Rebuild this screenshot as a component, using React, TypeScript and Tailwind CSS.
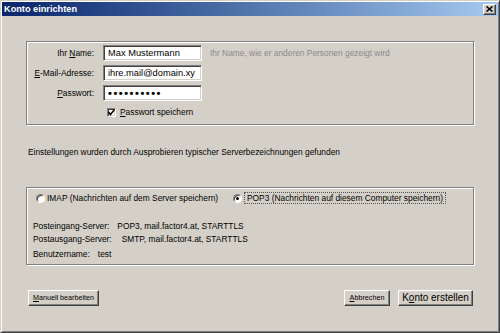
import React from "react";

const sunken =
  "border border-t-[#808080] border-l-[#808080] border-r-white border-b-white shadow-[inset_1px_1px_0_#404040,inset_-1px_-1px_0_#d4d0c8]";
const raised =
  "border border-t-white border-l-white border-r-[#404040] border-b-[#404040] shadow-[inset_-1px_-1px_0_#808080] bg-[#d4d0c8]";
const groupbox =
  "border border-[#808080] shadow-[1px_1px_0_#fff,inset_1px_1px_0_#fff]";

function U({ children }: { children: React.ReactNode }) {
  return <span className="underline underline-offset-[1px]">{children}</span>;
}

function Field({ label, children }: { label: React.ReactNode; children: React.ReactNode }) {
  return (
    <div className="flex items-center h-[16px]">
      <div className="w-[67px] text-right pr-[0px]">{label}</div>
      <div className={`ml-[9px] w-[99px] h-[16px] bg-white ${sunken} flex items-center pl-[4px] overflow-hidden whitespace-nowrap text-[9.3px]`}>
        {children}
      </div>
    </div>
  );
}

function Radio({ checked }: { checked?: boolean }) {
  return (
    <span className="w-[9px] h-[9px] rounded-full bg-white border border-t-[#808080] border-l-[#808080] border-r-white border-b-white shadow-[inset_1px_1px_0_#404040] flex items-center justify-center shrink-0">
      {checked && <span className="w-[3px] h-[3px] rounded-full bg-black" />}
    </span>
  );
}

export default function App() {
  return (
    <div className="w-[500px] h-[333px] bg-[#d4d0c8] border border-t-[#d4d0c8] border-l-[#d4d0c8] border-r-[#404040] border-b-[#404040] p-px shadow-[inset_1px_1px_0_#fff,inset_-1px_-1px_0_#808080] flex flex-col font-['Liberation_Sans',Arial,sans-serif] text-[8.4px] text-black leading-[12px]">
      {/* title bar */}
      <div className="h-[14px] flex items-center justify-between bg-gradient-to-r from-[#0a246a] to-[#a6caf0] pl-[2px] pr-[2px]">
        <span className="text-white font-bold text-[9.2px]">Konto einrichten</span>
        <button className={`w-[13px] h-[11px] ${raised} flex items-center justify-center`}>
          <svg width="7" height="6" viewBox="0 0 7 6">
            <path d="M0.5 0.5 L6.5 5.5 M6.5 0.5 L0.5 5.5" stroke="#000" strokeWidth="1.6" />
          </svg>
        </button>
      </div>

      <div className="flex flex-col px-[24px]">
        {/* account fields */}
        <div className={`mt-[25px] h-[84px] ${groupbox} pt-[3px] flex flex-col`}>
          <div className="flex items-center">
            <div className="flex flex-col gap-[4px]">
              <Field label={<>Ihr <U>N</U>ame:</>}>Max Mustermann</Field>
              <Field label={<><U>E</U>-Mail-Adresse:</>}>ihre.mail@domain.xy</Field>
              <Field label={<><U>P</U>asswort:</>}>
                <span className="text-[11px] font-bold tracking-[1.55px] leading-[12px]">••••••••••</span>
              </Field>
            </div>
            <div className="self-start ml-[8px] text-[#8a8a8a] h-[16px] flex items-center">
              Ihr Name, wie er anderen Personen gezeigt wird
            </div>
          </div>
          <div className="flex items-center h-[14px] mt-[4px] ml-[80px]">
            <span className={`w-[9px] h-[9px] bg-white ${sunken} flex items-center justify-center shrink-0`}>
              <svg width="7" height="7" viewBox="0 0 7 7">
                <path d="M0.5 3 L2.5 5.5 L6.5 0.5" stroke="#000" strokeWidth="1.5" fill="none" />
              </svg>
            </span>
            <span className="ml-[4px]"><U>P</U>asswort speichern</span>
          </div>
        </div>

        <div className="mt-[21px] pl-[2px] h-[12px]">
          Einstellungen wurden durch Ausprobieren typischer Serverbezeichnungen gefunden
        </div>

        {/* server settings */}
        <div className={`mt-[29px] h-[78px] ${groupbox} pt-[4px] pl-[9px] flex flex-col`}>
          <div className="flex items-center h-[12px]">
            <div className="w-[197px] flex items-center gap-[2px]">
              <Radio />
              <span>IMAP (Nachrichten auf dem Server speichern)</span>
            </div>
            <div className="flex items-center gap-[2px]">
              <Radio checked />
              <span className="border border-dotted border-[#555] px-[2px] h-[12px] flex items-center">
                POP3 (Nachrichten auf diesem Computer speichern)
              </span>
            </div>
          </div>
          <div className="mt-[16px] pl-[-3px] -ml-[3px] flex flex-col">
            <div className="h-[12px]">Posteingang-Server:<span className="ml-[8px]">POP3, mail.factor4.at, STARTTLS</span></div>
            <div className="h-[12px] mt-[1px]">Postausgang-Server:<span className="ml-[10px]">SMTP, mail.factor4.at, STARTTLS</span></div>
            <div className="h-[12px] mt-[3px]">Benutzername:<span className="ml-[8px]">test</span></div>
          </div>
        </div>

        {/* buttons */}
        <div className="mt-[25px] flex items-center">
          <button className={`ml-[2px] w-[71px] h-[16px] ${raised} text-[7.2px] flex items-center justify-center`}>
            <U>M</U>anuell bearbeiten
          </button>
          <button className={`ml-auto w-[46px] h-[16px] ${raised} text-[7.2px] flex items-center justify-center`}>
            <U>A</U>bbrechen
          </button>
          <button className={`ml-[8px] mr-px w-[75px] h-[16px] ${raised} text-[10px] flex items-center justify-center`}>
            K<U>o</U>nto erstellen
          </button>
        </div>
      </div>
    </div>
  );
}
